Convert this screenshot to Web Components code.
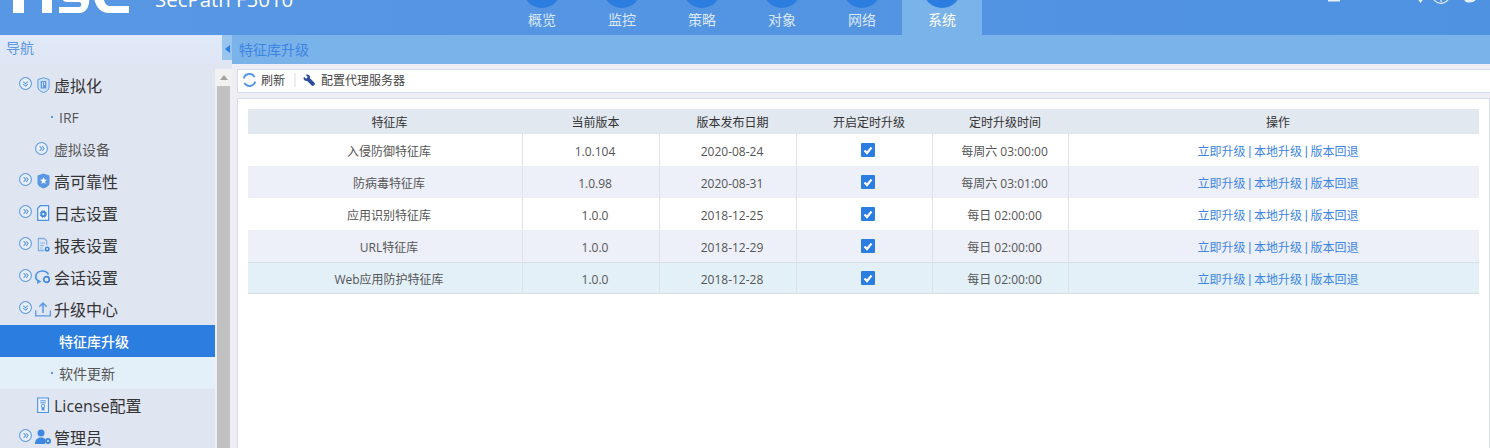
<!DOCTYPE html>
<html lang="zh">
<head>
<meta charset="utf-8">
<title>特征库升级</title>
<style>
  html, body { margin: 0; height: 100%; overflow: hidden; }
  body { font-family: "Open Sans", "Noto Sans CJK SC", sans-serif; background: #eeeef4; }
</style>
</head>
<body>
<app-shell>
  <top-bar slot="top"></top-bar>
  <side-nav slot="side"></side-nav>
  <upgrade-page slot="main"></upgrade-page>
</app-shell>

<script>
const FONT = `"Open Sans", "Noto Sans CJK SC", sans-serif`;

class AppShell extends HTMLElement {
  constructor() {
    super();
    this.attachShadow({ mode: "open" }).innerHTML = `
      <style>
        :host { display: grid; grid-template-rows: 35px 413px; grid-template-columns: 232px 1fr; height: 448px; overflow: hidden; }
        .top { grid-column: 1 / 3; }
      </style>
      <div class="top"><slot name="top"></slot></div>
      <slot name="side"></slot>
      <slot name="main"></slot>`;
  }
}

class TopBar extends HTMLElement {
  constructor() {
    super();
    const tabs = ["概览", "监控", "策略", "对象", "网络", "系统"];
    const tabHtml = tabs.map((t, i) => `
      <div class="tab ${i === 5 ? "on" : ""}"><i class="dot"></i><span>${t}</span></div>`).join("");
    this.attachShadow({ mode: "open" }).innerHTML = `
      <style>
        :host { display: flex; height: 35px; overflow: hidden; position: relative; background: linear-gradient(90deg, #5897e3, #4f92e2); color: #fff; font-family: ${FONT}; }
        .logo { margin: -23px 0 0 13px; width: 116px; height: 36px; flex: none; }
        .product { margin: -12px 0 0 26px; width: 347px; flex: none; font-size: 20.4px; line-height: 23px; height: 23px; white-space: nowrap; }
        .tabs { display: flex; flex: none; }
        .tab { width: 80px; height: 35px; display: flex; flex-direction: column; align-items: center; font-size: 14px; color: #dbe8f8; }
        .tab.on { background: #7ab2ea; color: #fff; }
        .dot { width: 38px; height: 38px; border-radius: 50%; background: #2b7de0; margin-top: -30px; flex: none; }
        .tab span { line-height: 16px; margin-top: 4px; }
        .tools { position: absolute; top: 0; left: 0; }
      </style>
      <svg class="logo" viewBox="0 0 116 36" fill="#fff">
        <path d="M0 0h11v14h18V0h10v36H29V22H11v14H0z"/>
        <path d="M46 36v-6h20c3 0 3-5 0-5H54c-10 0-10-25 2-25h20v6H58c-3 0-3 5 0 5h11c10 0 10 25-2 25z"/>
        <path d="M116 36H96c-20 0-20-36 0-36h20v7H97c-9 0-9 22 0 22h19z"/>
      </svg>
      <div class="product">SecPath F5010</div>
      <div class="tabs">${tabHtml}</div>
      <svg class="tools" width="1490" height="8" viewBox="0 0 1490 8" fill="none" stroke="#e6effa" stroke-width="1.2">
        <path d="M1328 .5h12" stroke-width="2"/>
        <path d="M1419 0l1.500 2 1.500-2z" fill="#fff"/>
        <circle cx="1441" cy="-5.200" r="8.500"/>
        <path d="M1441 0v2"/>
        <path d="M1465 0c1 2.600 8 2.600 10 0z" fill="#e6effa"/>
      </svg>`;
  }
}

const ICONS = {
  vm: `<path d="M1 2.500L7 .8l6 1.700V10c0 3-3 4.500-6 5.500C4 14.500 1 13 1 10z" fill="#d4e2f6" stroke="#5a98e4"/><path d="M4 4h6v7.500H4z" fill="#5a98e4"/><path d="M6 5v5.500M8 5v3" stroke="#e0e5f2"/>`,
  ha: `<path d="M.5 2.500L7 .5l6.500 2V10c0 3-3.500 4.500-6.500 5.500C4 14.500.5 13 .5 10z" fill="#5a98e4"/><path d="M7 4l1 2.500 2.600.2-2 1.700.7 2.600L7 9.600 4.700 11l.7-2.600-2-1.700 2.600-.2z" fill="#fff"/>`,
  log: `<path d="M3.500.7h9v14.600H.7V3.500z" fill="#eef3fb" stroke="#4d92e4" stroke-width="1.300"/><circle cx="6.800" cy="9" r="2.200" fill="none" stroke="#3f88e0" stroke-width="2"/><circle cx="6.800" cy="9" r="3.400" fill="none" stroke="#3f88e0" stroke-dasharray="1.300 1.400"/>`,
  report: `<path d="M8 13.500H1.500V1.500h6.500l2.500 2.500v4" fill="none" stroke="#7faee8" stroke-width="1.300"/><path d="M3.500 6h5M3.500 8.500h4M3.500 11h2.500" stroke="#7faee8"/><circle cx="11" cy="12" r="1.800" fill="none" stroke="#3f88e0" stroke-width="1.600"/>`,
  chat: `<path d="M4.500 12C2 11.500.8 9.800.8 7.500.8 4 4 2 7.500 2c2.800 0 5 1.300 6 3.500" fill="none" stroke="#4d92e4" stroke-width="1.700"/><path d="M2.500 11l-.5 4 4.500-2.500z" fill="#4d92e4"/><circle cx="11.500" cy="10.500" r="2.800" fill="none" stroke="#3f88e0" stroke-width="1.700"/>`,
  upload: `<path d="M.7 9.500V14.800h14.600V9.500" fill="none" stroke="#5a98e4" stroke-width="1.300"/><path d="M8 12V2.500M4.300 5.800L8 2l3.700 3.800" fill="none" stroke="#5a98e4" stroke-width="1.500"/>`,
  license: `<path d="M.7 1h11.600v14.500H.7z" fill="#eef3fb" stroke="#4d92e4" stroke-width="1.200"/><path d="M3.500 3.800h6M3.500 5.800h6" stroke="#4d92e4"/><circle cx="6.500" cy="9" r="1.800" fill="none" stroke="#4d92e4"/><path d="M5 10.500v3.500l1.500-1 1.500 1v-3.500" fill="#4d92e4"/>`,
  admin: `<circle cx="6" cy="4" r="3.500" fill="#3f88e0"/><path d="M0 15c0-5 3-6.500 6-6.500 1.500 0 3 .4 4 1.400V15z" fill="#3f88e0"/><circle cx="13" cy="12" r="2" fill="none" stroke="#3f88e0" stroke-width="2"/>`
};
const WIDE = ["chat", "upload", "admin"];

class NavRow extends HTMLElement {
  constructor() {
    super();
    const kind = this.getAttribute("kind");           // group, sub, leaf, current, plain
    const open = this.hasAttribute("open");
    const icon = this.getAttribute("icon");
    const arrow = open
      ? `<path d="M5 5.800l3 2.400 3-2.400M5 8.800l3 2.400 3-2.400"/>`
      : `<path d="M5.800 5l2.400 3-2.400 3M8.800 5l2.400 3-2.400 3"/>`;
    const circle = `<svg class="arrow" viewBox="0 0 16 16" fill="none" stroke="#5a98e4" stroke-width="1.300"><circle cx="8" cy="8" r="7.300" fill="#eaf0fa"/>${arrow}</svg>`;
    const wide = WIDE.includes(icon);
    this.attachShadow({ mode: "open" }).innerHTML = `
      <style>
        :host { display: flex; align-items: center; height: 32px; white-space: nowrap; font-size: 16px; color: #333; }
        :host([kind=leaf]), :host([kind=current]) { font-size: 14px; color: #555; }
        :host([kind=sub]) { font-size: 14px; color: #555; padding-left: 35px; }
        :host([kind=group]), :host([kind=plain]) { padding-left: 19px; }
        :host([kind=current]) { background: #2b7de0; color: #fff; font-weight: 500; }
        :host([active]) { background: #e3f0f9; }
        .arrow { width: 13px; height: 13px; flex: none; margin: -4px 5px 0 0; }
        :host([kind=sub]) .arrow { margin: -2px 6px 0 0; }
        .ico { width: 13px; height: 16px; flex: none; margin: 0 4px 0 0; overflow: visible; }
        .ico.wide { width: 16px; margin: 0 3px 0 -2px; }
        .gap { width: 18px; flex: none; }
        .pip { width: 2px; height: 2px; background: #5a98e4; margin: 0 6px 0 51px; flex: none; }
        :host([kind=current]) .pip { background: transparent; }
      </style>
      ${kind === "group" || kind === "sub" ? circle : ""}
      ${kind === "plain" ? `<span class="gap"></span>` : ""}
      ${icon ? `<svg class="ico ${wide ? "wide" : ""}" viewBox="0 0 ${wide ? 16 : 14} 16" preserveAspectRatio="none">${ICONS[icon]}</svg>` : ""}
      ${kind === "leaf" || kind === "current" ? `<i class="pip"></i>` : ""}
      <span><slot></slot></span>`;
  }
}

class SideNav extends HTMLElement {
  constructor() {
    super();
    this.attachShadow({ mode: "open" }).innerHTML = `
      <style>
        :host { display: flex; flex-direction: column; height: 413px; position: relative; font-family: ${FONT}; background: #e0e5f2; }
        .title { height: 29px; flex: none; width: 232px; background: linear-gradient(#e0e9f9, #dfe6f5); color: #5a98e4; font-size: 14px; line-height: 26px; padding-left: 6px; box-sizing: border-box; position: relative; }
        .fold { position: absolute; right: 0; top: 0; width: 10px; height: 25px; padding-top: 3px; box-sizing: border-box; background: #98c4f0; display: flex; align-items: center; justify-content: center; }
        .fold i { border: 4px solid transparent; border-right: 5px solid #2b7de0; border-left: 0; }
        .body { display: flex; flex: 1; min-height: 0; }
        .list { width: 215px; padding-top: 5px; box-sizing: border-box; overflow: hidden; flex: none; }
        .scroll { width: 17px; margin-top: 5px; background: #eeeef4; display: flex; flex-direction: column; flex: none; }
        .up { height: 17px; display: flex; align-items: center; justify-content: center; background: #f1f1f1; flex: none; }
        .up i { border: 4px solid transparent; border-top: 0; border-bottom: 5px solid #a3a3a3; }
        .thumb { flex: 1; background: #c1c1c1; margin: 0 2px; }
      </style>
      <div class="title">导航<span class="fold"><i></i></span></div>
      <div class="body">
        <div class="list">
          <nav-row kind="group" open icon="vm">虚拟化</nav-row>
          <nav-row kind="leaf">IRF</nav-row>
          <nav-row kind="sub">虚拟设备</nav-row>
          <nav-row kind="group" icon="ha">高可靠性</nav-row>
          <nav-row kind="group" icon="log">日志设置</nav-row>
          <nav-row kind="group" icon="report">报表设置</nav-row>
          <nav-row kind="group" icon="chat">会话设置</nav-row>
          <nav-row kind="group" open icon="upload">升级中心</nav-row>
          <nav-row kind="current">特征库升级</nav-row>
          <nav-row kind="leaf" active>软件更新</nav-row>
          <nav-row kind="plain" icon="license">License配置</nav-row>
          <nav-row kind="group" icon="admin">管理员</nav-row>
        </div>
        <div class="scroll"><div class="up"><i></i></div><div class="thumb"></div></div>
      </div>`;
  }
}

class UpgradeRow extends HTMLElement {
  constructor() {
    super();
    const [name, ver, date, time] = ["name", "ver", "date", "time"].map(a => this.getAttribute(a));
    this.attachShadow({ mode: "open" }).innerHTML = `
      <style>
        :host { display: grid; grid-template-columns: var(--cols); height: 32px; font-size: 12px; color: #555; background: #fff; }
        :host([odd]) { background: #edf0f8; }
        :host([hot]) { background: #e3f0f8; box-shadow: inset 0 1px #d8dde2, inset 0 -1px #d8dde2; }
        div { display: flex; align-items: center; justify-content: center; border-right: 1px solid #e0e2e7; padding: 2px 0 0 8px; }
        div:last-child { border-right: 0; }
        .check { width: 14px; height: 14px; background: #2b7de0; border-radius: 1px; margin: -2px 2px 0 0; }
        .links { color: #3d85e2; gap: 2.700px; }
        .links b { font: 12px "Liberation Sans", sans-serif; }
      </style>
      <div>${name}</div><div>${ver}</div><div>${date}</div>
      <div><svg class="check" viewBox="0 0 14 14" fill="none" stroke="#fff" stroke-width="2.200"><path d="M3.500 7.500l2.500 2.500 4.500-5.500"/></svg></div>
      <div>${time}</div>
      <div class="links"><span>立即升级</span><b>|</b><span>本地升级</span><b>|</b><span>版本回退</span></div>`;
  }
}

class UpgradePage extends HTMLElement {
  constructor() {
    super();
    const head = ["特征库", "当前版本", "版本发布日期", "开启定时升级", "定时升级时间", "操作"];
    this.attachShadow({ mode: "open" }).innerHTML = `
      <style>
        :host { display: flex; flex-direction: column; height: 413px; font-family: ${FONT}; background: #eeeef4; --cols: 275px 137px 137px 136px 136px 410px; }
        .crumb { height: 29px; flex: none; background: #7ab2ea; color: #3d85e2; font-size: 14px; line-height: 29px; padding-left: 7px; }
        .tools { height: 24px; flex: none; margin: 5px 0 0 5px; background: #fff; border: 1px solid #d5dbea; border-right: 0; box-sizing: border-box; display: flex; align-items: center; font-size: 12px; color: #444; padding: 0 0 2px 4px; }
        .tools svg { flex: none; }
        .sep { width: 2px; height: 14px; background: #eceef3; margin: 0 7px 0 9px; }
        .panel { margin: 5px 0 0 5px; flex: 1; background: #fff; border: 1px solid #d5dbea; border-width: 1px 1px 0 1px; box-sizing: border-box; padding: 10px 10px 0; }
        .head { display: grid; grid-template-columns: var(--cols); height: 25px; background: #e2e8ef; font-size: 12px; color: #333; }
        .head div { display: flex; align-items: center; justify-content: center; padding-left: 8px; }
      </style>
      <div class="crumb">特征库升级</div>
      <div class="tools">
        <svg width="15" height="14" viewBox="0 0 15 14" fill="none" stroke="#5a98e4" stroke-width="2" style="margin-right:4px"><path d="M1.800 5.500A5.800 5.800 0 0 1 12.500 4"/><path d="M13.200 8.500A5.800 5.800 0 0 1 2.500 10"/></svg>
        <span>刷新</span><i class="sep"></i>
        <svg width="12" height="12" viewBox="0 0 12 12" fill="#2b4f9e" style="margin:0 6px 0 0"><path d="M1 2.800L3 4.800 4.800 3 2.800 1C4.800 0 7 1 7 3.400V4.200l4.500 4.500c.5.500.5 1.300 0 2l-.8.800c-.7.500-1.500.5-2 0L4.200 7H3.400C1 7 0 4.800 1 2.800z"/></svg>
        <span>配置代理服务器</span>
      </div>
      <div class="panel">
        <div class="head">${head.map(h => `<div>${h}</div>`).join("")}</div>
        <upgrade-row name="入侵防御特征库" ver="1.0.104" date="2020-08-24" time="每周六 03:00:00"></upgrade-row>
        <upgrade-row odd name="防病毒特征库" ver="1.0.98" date="2020-08-31" time="每周六 03:01:00"></upgrade-row>
        <upgrade-row name="应用识别特征库" ver="1.0.0" date="2018-12-25" time="每日 02:00:00"></upgrade-row>
        <upgrade-row odd name="URL特征库" ver="1.0.0" date="2018-12-29" time="每日 02:00:00"></upgrade-row>
        <upgrade-row hot name="Web应用防护特征库" ver="1.0.0" date="2018-12-28" time="每日 02:00:00"></upgrade-row>
      </div>`;
  }
}

customElements.define("app-shell", AppShell);
customElements.define("top-bar", TopBar);
customElements.define("nav-row", NavRow);
customElements.define("side-nav", SideNav);
customElements.define("upgrade-row", UpgradeRow);
customElements.define("upgrade-page", UpgradePage);
</script>
</body>
</html>
